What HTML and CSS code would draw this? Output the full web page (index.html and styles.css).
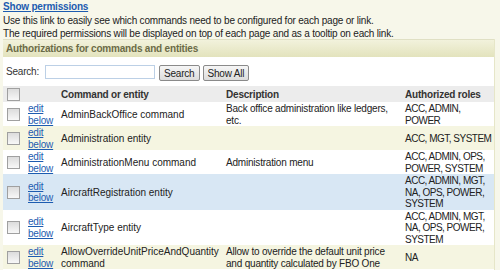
FILE: index.html
```html
<!DOCTYPE html>
<html lang="en">
<head>
  <meta charset="UTF-8">
  <title>Authorizations</title>
  <link rel="stylesheet" href="styles.css">
</head>
<body>
  <div class="intro">
    <a href="#" class="show-link">Show permissions</a>
    <p>Use this link to easily see which commands need to be configured for each page or link.<br>
    The required permissions will be displayed on top of each page and as a tooltip on each link.</p>
  </div>

  <div class="panel">
    <div class="panel-head">Authorizations for commands and entities</div>

    <div class="search-row">
      <label>Search:</label>
      <input type="text" class="search-box">
      <button class="btn">Search</button>
      <button class="btn">Show All</button>
    </div>

    <table class="auth-table">
      <colgroup>
        <col class="col-check">
        <col class="col-edit">
        <col class="col-name">
        <col class="col-desc">
        <col class="col-roles">
      </colgroup>
      <thead>
        <tr>
          <th><span class="cb"></span></th>
          <th></th>
          <th>Command or entity</th>
          <th>Description</th>
          <th class="roles-head">Authorized roles</th>
        </tr>
      </thead>
      <tbody id="rows">
        <!-- rows -->
      </tbody>
    </table>
  </div>

  <script>
    const items = [
      { name: 'AdminBackOffice command', desc: 'Back office administration like ledgers, etc.', roles: 'ACC, ADMIN, POWER', cls: '' },
      { name: 'Administration entity', desc: '', roles: 'ACC, MGT, SYSTEM', cls: 'alt' },
      { name: 'AdministrationMenu command', desc: 'Administration menu', roles: 'ACC, ADMIN, OPS, POWER, SYSTEM', cls: '' },
      { name: 'AircraftRegistration entity', desc: '', roles: 'ACC, ADMIN, MGT, NA, OPS, POWER, SYSTEM', cls: 'hover' },
      { name: 'AircraftType entity', desc: '', roles: 'ACC, ADMIN, MGT, NA, OPS, POWER, SYSTEM', cls: '' },
      { name: 'AllowOverrideUnitPriceAndQuantity command', desc: 'Allow to override the default unit price and quantity calculated by FBO One', roles: 'NA', cls: 'alt' },
      { name: 'AllowSomething command', desc: '', roles: 'ACC, ADMIN, MGT, NA, OPS', cls: '' }
    ];

    const tbody = document.getElementById('rows');
    items.forEach(item => {
      tbody.innerHTML += `
        <tr class="${item.cls}">
          <td><span class="cb"></span></td>
          <td class="edit"><a href="#">edit</a><br><a href="#">below</a></td>
          <td class="name">${item.name}</td>
          <td>${item.desc}</td>
          <td class="roles">${item.roles}</td>
        </tr>
      `;
    });
  </script>
</body>
</html>
```

FILE: styles.css
```css
body {
  margin: 0;
  background-color: #f7f7ea;
  font-family: "Liberation Sans", Arial, sans-serif;
  font-size: 10px;
  letter-spacing: -0.2px;
  color: #222;
}

.intro {
  padding: 0 3px;
  height: 39px;
}

.intro p {
  margin: 0;
  line-height: 13px;
}

.show-link {
  display: block;
  color: #1d5cb0;
  font-weight: bold;
  line-height: 14px;
}

.panel {
  margin: 0 5px 0 3px;
  background-color: #fff;
  border-right: 1px solid #e6e6c8;
}

.panel-head {
  height: 17px;
  line-height: 17px;
  padding: 0 3px;
  font-weight: bold;
  color: #6b6b47;
  background: linear-gradient(#f2f2dc, #e3e3bd);
  border-top: 1px solid #e0e0c4;
}

.search-row {
  display: flex;
  align-items: center;
  height: 29px;
  padding: 0 3px;
}

.search-row label {
  width: 39px;
  color: #333;
}

.search-box {
  width: 104px;
  height: 10px;
  border: 1px solid #bcd0e6;
  padding: 1px 2px;
  margin: 0 4px 0 0;
}

.btn {
  font-family: inherit;
  font-size: 10px;
  letter-spacing: -0.2px;
  height: 16px;
  padding: 0 4px;
  margin-right: 3px;
  margin-top: 3px;
  border: 1px solid #8a8a8a;
  border-radius: 2px;
  color: #222;
  background: linear-gradient(#f6f6f6, #dcdcdc);
}

.auth-table {
  width: 100%;
  table-layout: fixed;
  border-collapse: collapse;
}

.col-check {
  width: 22px;
}

.col-edit {
  width: 33px;
}

.col-name {
  width: 165px;
}

.col-desc {
  width: 179px;
}

.auth-table th,
.auth-table td {
  text-align: left;
  vertical-align: middle;
  line-height: 11.5px;
  padding: 1px 3px 0;
}

.auth-table th {
  background-color: #ececec;
  height: 15px;
  color: #333;
}

.auth-table td.name {
  letter-spacing: 0;
}

.auth-table .roles {
  padding-right: 0;
  letter-spacing: -0.5px;
}

.auth-table .roles-head {
  padding-right: 0;
}

.auth-table tr.alt td {
  background-color: #f5f5e1;
}

.auth-table tr.hover td {
  background-color: #d8e7f4;
}

.edit {
  padding-left: 1px;
}

.edit a {
  color: #1d5cb0;
}

.cb {
  display: block;
  width: 11px;
  height: 11px;
  border: 1px solid #a0a0a0;
  background: linear-gradient(#dcdcdc, #f8f8f8);
  margin-left: 1px;
}
```
